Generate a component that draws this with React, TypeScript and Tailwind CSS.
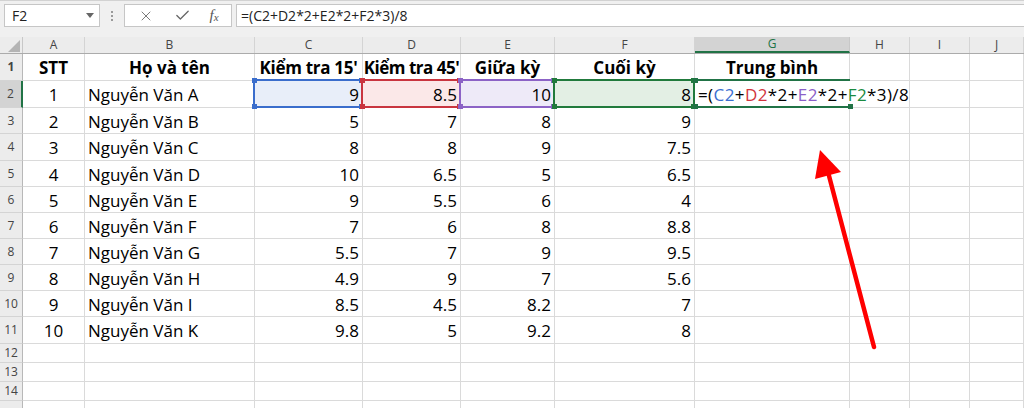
import { X, Check } from "lucide-react";

const FONT = "font-['Open_Sans',_'Noto_Sans',_sans-serif]";

const COLS = [
  { k: "A", w: "w-[62px]" },
  { k: "B", w: "w-[170px]" },
  { k: "C", w: "w-[108px]" },
  { k: "D", w: "w-[98px]" },
  { k: "E", w: "w-[94px]" },
  { k: "F", w: "w-[140px]" },
  { k: "G", w: "w-[155px]" },
  { k: "H", w: "w-[60px]" },
  { k: "I", w: "w-[60px]" },
  { k: "J", w: "flex-1" },
];

const ROWS: [number, string, string, string, string, string][] = [
  [1, "Nguyễn Văn A", "9", "8.5", "10", "8"],
  [2, "Nguyễn Văn B", "5", "7", "8", "9"],
  [3, "Nguyễn Văn C", "8", "8", "9", "7.5"],
  [4, "Nguyễn Văn D", "10", "6.5", "5", "6.5"],
  [5, "Nguyễn Văn E", "9", "5.5", "6", "4"],
  [6, "Nguyễn Văn F", "7", "6", "8", "8.8"],
  [7, "Nguyễn Văn G", "5.5", "7", "9", "9.5"],
  [8, "Nguyễn Văn H", "4.9", "9", "7", "5.6"],
  [9, "Nguyễn Văn I", "8.5", "4.5", "8.2", "7"],
  [10, "Nguyễn Văn K", "9.8", "5", "9.2", "8"],
];

// heights for rows 2..11
const ROW_H = ["h-[27px]", "h-[26px]", "h-[27px]", "h-[26px]", "h-[26px]", "h-[26px]", "h-[26px]", "h-[26px]", "h-[26px]", "h-[27px]"];

// range highlight colours for C2..F2
const RANGES = [
  { bg: "bg-[#e8eef9]", border: "border-[#3a6dcc]", dot: "bg-[#3a6dcc]" },
  { bg: "bg-[#fbe8e8]", border: "border-[#c9353f]", dot: "bg-[#c9353f]" },
  { bg: "bg-[#eeeaf8]", border: "border-[#8c63c6]", dot: "bg-[#8c63c6]" },
  { bg: "bg-[#e3efe4]", border: "border-[#217a3c]", dot: "bg-[#217a3c]" },
];

function RowHead({ n, h, active }: { n?: number; h: string; active?: boolean }) {
  return (
    <div
      className={`${h} w-[23px] shrink-0 flex items-center justify-center text-[12px] text-[#444] border-b border-[#d4d4d4] ${active ? "bg-[#d3d3d3] border-r-2 border-r-[#217346]" : "bg-[#ececec] border-r border-r-[#b8b8b8]"}`}
    >
      {n}
    </div>
  );
}

function Cell({ w, align = "left", className = "", children }: { w: string; align?: "left" | "right" | "center"; className?: string; children?: React.ReactNode }) {
  const a = align === "right" ? "justify-end pr-[3px]" : align === "center" ? "justify-center" : "justify-start pl-[3px]";
  return (
    <div className={`${w} shrink-0 relative flex items-center pt-[2px] whitespace-nowrap border-r border-b border-[#dadada] ${a} ${className}`}>
      {children}
    </div>
  );
}

function Handles({ dot }: { dot: string }) {
  return (
    <>
      <span className={`absolute -top-[3px] -left-[3px] w-[5px] h-[5px] ${dot}`} />
      <span className={`absolute -top-[3px] -right-[3px] w-[5px] h-[5px] ${dot}`} />
      <span className={`absolute -bottom-[3px] -left-[3px] w-[5px] h-[5px] ${dot}`} />
      <span className={`absolute -bottom-[3px] -right-[3px] w-[5px] h-[5px] ${dot}`} />
    </>
  );
}

function FormulaBar() {
  return (
    <div className="h-[37px] bg-[#f0f0f0] border-t border-[#d2d2d2] flex items-start pt-[3px]">
      <div className="ml-[4px] w-[96px] h-[23px] bg-white border border-[#c6c6c6] flex items-center justify-between pl-[7px] pr-[5px] text-[14px] text-[#222]">
        <span>F2</span>
        <svg width="8" height="5" viewBox="0 0 8 5"><path d="M0 0h8L4 5z" fill="#666" /></svg>
      </div>
      <div className="w-[24px] h-[23px] flex flex-col items-center justify-center gap-[2px]">
        <span className="w-[2px] h-[2px] bg-[#9a9a9a]" />
        <span className="w-[2px] h-[2px] bg-[#9a9a9a]" />
        <span className="w-[2px] h-[2px] bg-[#9a9a9a]" />
      </div>
      <div className="w-[108px] h-[23px] bg-white border border-[#c6c6c6] flex items-center text-[#666]">
        <span className="w-[42px] flex justify-center"><X size={16} strokeWidth={1.3} /></span>
        <span className="w-[30px] flex justify-center"><Check size={17} strokeWidth={1.8} /></span>
        <span className="w-[34px] flex justify-center items-baseline font-['Liberation_Serif',_serif] italic text-[15px] leading-none text-[#555]">
          f<span className="text-[11px] relative top-[1px]">x</span>
        </span>
      </div>
      <div className="ml-[4px] flex-1 h-[23px] bg-white border-y border-l border-[#c6c6c6] flex items-center pl-[4px] text-[14px] text-[#222]">
        =(C2+D2*2+E2*2+F2*3)/8
      </div>
    </div>
  );
}

export default function App() {
  return (
    <div className={`relative w-[1024px] h-[408px] overflow-hidden bg-white text-black ${FONT}`}>
      <FormulaBar />

      {/* column headers */}
      <div className="flex h-[17px] bg-[#ececec] border-b border-[#ababab]">
        <div className="w-[23px] shrink-0 relative border-r border-[#c8c8c8]">
          <svg className="absolute right-[2px] bottom-[1px]" width="12" height="12" viewBox="0 0 12 12"><path d="M12 0V12H0z" fill="#b4b4b4" /></svg>
        </div>
        {COLS.map((c) => (
          <div
            key={c.k}
            className={`${c.w} shrink-0 flex items-center justify-center text-[12px] ${c.k === "G" ? "bg-[#d3d3d3] text-[#217346] border-b-2 border-[#217346] border-r border-r-[#c8c8c8]" : "text-[#444] border-r border-[#d4d4d4]"}`}
          >
            {c.k}
          </div>
        ))}
      </div>

      {/* row 1: titles */}
      <div className="flex h-[27px] text-[17px] font-bold">
        <RowHead n={1} h="h-[27px]" />
        <Cell w="w-[62px]" align="center">STT</Cell>
        <Cell w="w-[170px]" align="center">Họ và tên</Cell>
        <Cell w="w-[108px]" align="center" className="tracking-[-0.3px]">Kiểm tra 15'</Cell>
        <Cell w="w-[98px]" align="center" className="tracking-[-0.5px]">Kiểm tra 45'</Cell>
        <Cell w="w-[94px]" align="center">Giữa kỳ</Cell>
        <Cell w="w-[140px]" align="center">Cuối kỳ</Cell>
        <Cell w="w-[155px]" align="center">Trung bình</Cell>
        <Cell w="w-[60px]" />
        <Cell w="w-[60px]" />
        <Cell w="flex-1" />
      </div>

      {/* data rows */}
      {ROWS.map((r, i) => {
        const first = i === 0;
        const h = ROW_H[i];
        return (
          <div key={r[0]} className={`flex ${h} text-[17px]`}>
            <RowHead n={r[0] + 1} h={h} active={first} />
            <Cell w="w-[62px]" align="center">{r[0]}</Cell>
            <Cell w="w-[170px]">{r[1]}</Cell>
            {[r[2], r[3], r[4], r[5]].map((v, j) => {
              const w = ["w-[108px]", "w-[98px]", "w-[94px]", "w-[140px]"][j];
              const rg = RANGES[j];
              return (
                <Cell key={j} w={w} align="right" className={first ? rg.bg : ""}>
                  {v}
                  {first && (
                    <div className={`absolute z-10 -top-[2px] -left-[2px] -right-[1px] -bottom-[1px] border-2 ${rg.border}`}>
                      <Handles dot={rg.dot} />
                    </div>
                  )}
                </Cell>
              );
            })}
            {first ? (
              <Cell w="w-[155px]" className="border-r-transparent">
                <span className="shrink-0 tracking-[0.4px]">
                  =(<span className="text-[#3b6fd1]">C2</span>+<span className="text-[#d1343d]">D2</span>*2+
                  <span className="text-[#8b5fc8]">E2</span>*2+<span className="text-[#1b8a3f]">F2</span>*3)/8
                </span>
                <span className="shrink-0 inline-block w-px h-[22px] bg-black" />
                <div className="absolute z-10 -top-[2px] left-[1px] -right-[1px] -bottom-[1px] border-y-2 border-[#217346]">
                  <span className="absolute -top-[3px] -left-[3px] w-[5px] h-[5px] bg-[#217346]" />
                  <span className="absolute -bottom-[3px] -left-[3px] w-[5px] h-[5px] bg-[#217346]" />
                  <span className="absolute -bottom-[3px] -right-[3px] w-[5px] h-[5px] bg-[#217346]" />
                </div>
              </Cell>
            ) : (
              <Cell w="w-[155px]" />
            )}
            <Cell w="w-[60px]" />
            <Cell w="w-[60px]" />
            <Cell w="flex-1" />
          </div>
        );
      })}

      {/* empty rows */}
      {[12, 13, 14, 15].map((n) => (
        <div key={n} className="flex h-[19px]">
          <RowHead n={n < 15 ? n : undefined} h="h-[19px]" />
          {COLS.map((c) => (
            <Cell key={c.k} w={c.w} />
          ))}
        </div>
      ))}

      {/* red annotation arrow */}
      <svg className="absolute left-0 top-0 pointer-events-none z-20" width="1024" height="408" viewBox="0 0 1024 408">
        <line x1="874" y1="347" x2="828" y2="172" stroke="#ff0000" strokeWidth="4.5" strokeLinecap="round" />
        <polygon points="820,150 815,179 841,172" fill="#ff0000" />
      </svg>
    </div>
  );
}
